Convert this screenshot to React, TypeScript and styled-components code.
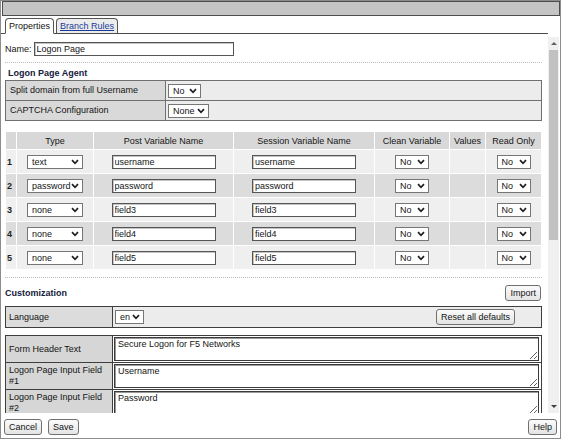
import React from "react";
import styled, { createGlobalStyle } from "styled-components";

const Global = createGlobalStyle`
  html, body { margin: 0; padding: 0; background: #fff; }
  body { font-family: "Liberation Sans", Arial, sans-serif; font-size: 9px; color: #141414; }
  * { box-sizing: border-box; }
`;

const FONT = `"Liberation Sans", Arial, sans-serif`;

const Window = styled.div`
  width: 561px;
  height: 439px;
  border: 1px solid #8c8c8c;
  display: flex;
  flex-direction: column;
  background: #fff;
  overflow: hidden;
`;

const TitleBar = styled.div`
  height: 15px;
  flex: none;
  margin: 0 0 0 1px;
  border: 1px solid #4d4d4d;
  background: #c4c4c4;
`;

const TabStrip = styled.div`
  flex: none;
  display: flex;
  align-items: flex-end;
  height: 17px;
  margin-top: 1px;
  padding-left: 4px;
  margin-right: 12px;
  border-bottom: 1px solid #4a4a4a;
`;

const Tab = styled.div<{ $active?: boolean }>`
  height: ${(p) => (p.$active ? 16 : 15)}px;
  padding: 0 3px;
  margin-right: 2px;
  margin-bottom: ${(p) => (p.$active ? "-1px" : "0")};
  border: 1px solid #555;
  border-bottom: ${(p) => (p.$active ? "1px solid #fff" : "none")};
  border-radius: 4px 4px 0 0;
  background: ${(p) => (p.$active ? "#fff" : "#ececec")};
  display: flex;
  align-items: center;
  color: ${(p) => (p.$active ? "#141414" : "#1a3a9a")};
  text-decoration: ${(p) => (p.$active ? "none" : "underline")};
`;

const Body = styled.div`
  flex: 1;
  display: flex;
  min-height: 0;
`;

const Content = styled.div`
  flex: 1;
  overflow: hidden;
  padding: 0 6px 0 4px;
  display: flex;
  flex-direction: column;
`;

const NameRow = styled.div`
  margin-top: 7px;
  height: 15px;
  display: flex;
  align-items: center;
  gap: 2px;
  flex: none;
`;

const Separator = styled.div<{ $mt: number }>`
  flex: none;
  margin-top: ${(p) => p.$mt}px;
  border-top: 1px dotted #bdbdbd;
`;

const SectionTitle = styled.div`
  flex: none;
  font-weight: bold;
  color: #14203a;
  height: 12px;
  line-height: 12px;
  padding-left: 3px;
  margin-top: 4px;
`;

const AgentTable = styled.table`
  flex: none;
  margin-top: 1px;
  width: 100%;
  border-collapse: collapse;
  td {
    border: 1px solid #707070;
    height: 20px;
    padding: 0 0 0 4px;
    vertical-align: middle;
  }
`;

const LabelCell = styled.td<{ $bg?: string; $w?: number }>`
  background: ${(p) => p.$bg || "#d9d9d9"};
  ${(p) => (p.$w ? `width: ${p.$w}px;` : "")}
  line-height: 11px;
`;

const ValueCell = styled.td<{ $bg?: string }>`
  background: ${(p) => p.$bg || "#ececec"};
  && { padding-left: 2px; }
`;

const GridTable = styled.table`
  flex: none;
  margin-top: 10px;
  width: 537px;
  border-collapse: separate;
  border-spacing: 1px;
  table-layout: fixed;
  th {
    background: #d8d8d8;
    font-weight: normal;
    height: 17px;
    padding: 0;
    text-align: center;
  }
  td {
    height: 23px;
    padding: 0;
    text-align: center;
    vertical-align: middle;
  }
`;

const GridRow = styled.tr<{ $even: boolean }>`
  td { background: ${(p) => (p.$even ? "#dcdcdc" : "#efefef")}; }
`;

const IndexCell = styled.td`
  && { text-align: left; padding-left: 1px; font-weight: bold; color: #222; }
`;

const CustomHeader = styled.div`
  flex: none;
  margin-top: 6px;
  height: 17px;
  display: flex;
  align-items: center;
  justify-content: space-between;
  padding-right: 1px;
  font-weight: bold;
  color: #14203a;
`;

const LangTable = styled.table`
  flex: none;
  margin-top: 5px;
  width: 100%;
  border-collapse: collapse;
  td {
    border: 1px solid #3e3e3e;
    height: 21px;
    padding: 0 0 0 3px;
    vertical-align: middle;
  }
`;

const LangValue = styled.div`
  display: flex;
  align-items: center;
  justify-content: space-between;
  padding-right: 26px;
`;

const FormTable = styled.table`
  flex: none;
  margin-top: 7px;
  width: 100%;
  border-collapse: collapse;
  td {
    border: 1px solid #3e3e3e;
    height: 27px;
    padding: 0 0 0 3px;
    vertical-align: middle;
  }
`;

const FormValue = styled.td`
  background: #fff;
  && { padding: 1px 2px 1px 1px; }
`;

const TextArea = styled.textarea`
  display: block;
  width: 100%;
  height: 24px;
  border: 1px solid #3a3a3a;
  box-shadow: inset 1px 1px 0 #9a9a9a;
  font: 9px ${FONT};
  color: #141414;
  padding: 1px 3px;
  margin: 0;
  outline: none;
`;

const TextInput = styled.input<{ $w: number }>`
  width: ${(p) => p.$w}px;
  height: 14px;
  border: 1px solid #555;
  box-shadow: inset 1px 1px 0 #c4c4c4;
  padding: 0 2px;
  font: 9px ${FONT};
  color: #141414;
  background: #fff;
  outline: none;
  vertical-align: middle;
`;

const SelectBox = styled.span<{ $w: number }>`
  display: inline-flex;
  align-items: center;
  justify-content: space-between;
  width: ${(p) => p.$w}px;
  height: 14px;
  border: 1px solid #767676;
  background: #fff;
  padding: 0 3px 0 4px;
  vertical-align: middle;
  color: #141414;
  font-weight: normal;
  text-align: left;
  line-height: 12px;
`;

const Button = styled.button`
  height: 16px;
  padding: 0 4px;
  border: 1px solid #707070;
  border-radius: 3px;
  background: linear-gradient(#fbfbfb, #e4e4e4);
  font: 9px ${FONT};
  line-height: 14px;
  color: #141414;
  display: inline-flex;
  align-items: center;
`;

const Scrollbar = styled.div`
  flex: none;
  width: 11px;
  margin: 3px 1px 0 0;
  background: #f0f0f0;
  display: flex;
  flex-direction: column;
  align-items: center;
`;

const ArrowBox = styled.div`
  height: 12px;
  width: 100%;
  display: flex;
  align-items: center;
  justify-content: center;
`;

const Thumb = styled.div`
  margin-top: 1px;
  width: 9px;
  height: 190px;
  background: #c1c1c1;
`;

const Spacer = styled.div`
  flex: 1;
`;

const Footer = styled.div`
  flex: none;
  height: 25px;
  display: flex;
  align-items: center;
  gap: 6px;
  padding: 2px 3px 0 3px;
`;

const HelpWrap = styled.div`
  margin-left: auto;
  display: flex;
`;

const Chevron = () => (
  <svg width="8" height="6" viewBox="0 0 8 6">
    <path d="M1 1.2 L4 4.3 L7 1.2" fill="none" stroke="#1e1e1e" strokeWidth="1.7" />
  </svg>
);

const Dropdown = ({ value, w }: { value: string; w: number }) => (
  <SelectBox $w={w}>
    <span>{value}</span>
    <Chevron />
  </SelectBox>
);

const rows = [
  { type: "text", name: "username" },
  { type: "password", name: "password" },
  { type: "none", name: "field3" },
  { type: "none", name: "field4" },
  { type: "none", name: "field5" },
];

const formRows = [
  { label: "Form Header Text", value: "Secure Logon for F5 Networks" },
  { label: "Logon Page Input Field #1", value: "Username" },
  { label: "Logon Page Input Field #2", value: "Password" },
];

export default function App() {
  return (
    <>
      <Global />
      <Window>
        <TitleBar />
        <TabStrip>
          <Tab $active>Properties</Tab>
          <Tab>Branch Rules</Tab>
        </TabStrip>
        <Body>
          <Content>
            <NameRow>
              <span>Name:</span>
              <TextInput $w={200} defaultValue="Logon Page" />
            </NameRow>
            <Separator $mt={6} />
            <SectionTitle>Logon Page Agent</SectionTitle>
            <AgentTable>
              <tbody>
                <tr>
                  <LabelCell $w={160}>Split domain from full Username</LabelCell>
                  <ValueCell>
                    <Dropdown value="No" w={33} />
                  </ValueCell>
                </tr>
                <tr>
                  <LabelCell $w={160}>CAPTCHA Configuration</LabelCell>
                  <ValueCell>
                    <Dropdown value="None" w={41} />
                  </ValueCell>
                </tr>
              </tbody>
            </AgentTable>
            <GridTable>
              <colgroup>
                <col style={{ width: 10 }} />
                <col style={{ width: 76 }} />
                <col style={{ width: 139 }} />
                <col style={{ width: 140 }} />
                <col style={{ width: 74 }} />
                <col style={{ width: 35 }} />
                <col style={{ width: 55 }} />
              </colgroup>
              <thead>
                <tr>
                  <th />
                  <th>Type</th>
                  <th>Post Variable Name</th>
                  <th>Session Variable Name</th>
                  <th>Clean Variable</th>
                  <th>Values</th>
                  <th>Read Only</th>
                </tr>
              </thead>
              <tbody>
                {rows.map((r, i) => (
                  <GridRow key={i} $even={i % 2 === 1}>
                    <IndexCell>{i + 1}</IndexCell>
                    <td>
                      <Dropdown value={r.type} w={56} />
                    </td>
                    <td>
                      <TextInput $w={104} defaultValue={r.name} />
                    </td>
                    <td>
                      <TextInput $w={104} defaultValue={r.name} />
                    </td>
                    <td>
                      <Dropdown value="No" w={34} />
                    </td>
                    <td />
                    <td>
                      <Dropdown value="No" w={34} />
                    </td>
                  </GridRow>
                ))}
              </tbody>
            </GridTable>
            <Separator $mt={7} />
            <CustomHeader>
              <span>Customization</span>
              <Button>Import</Button>
            </CustomHeader>
            <LangTable>
              <tbody>
                <tr>
                  <LabelCell $bg="#dcdcdc" $w={107}>Language</LabelCell>
                  <ValueCell $bg="#ececec">
                    <LangValue>
                      <Dropdown value="en" w={29} />
                      <Button>Reset all defaults</Button>
                    </LangValue>
                  </ValueCell>
                </tr>
              </tbody>
            </LangTable>
            <FormTable>
              <tbody>
                {formRows.map((f) => (
                  <tr key={f.label}>
                    <LabelCell $bg="#d6d6d6" $w={107}>{f.label}</LabelCell>
                    <FormValue>
                      <TextArea defaultValue={f.value} />
                    </FormValue>
                  </tr>
                ))}
              </tbody>
            </FormTable>
          </Content>
          <Scrollbar>
            <ArrowBox>
              <svg width="6" height="4" viewBox="0 0 6 4">
                <path d="M0 4 L3 1 L6 4 Z" fill="#606060" />
              </svg>
            </ArrowBox>
            <Thumb />
            <Spacer />
            <ArrowBox>
              <svg width="6" height="4" viewBox="0 0 6 4">
                <path d="M0 0 L3 3 L6 0 Z" fill="#404040" />
              </svg>
            </ArrowBox>
          </Scrollbar>
        </Body>
        <Footer>
          <Button>Cancel</Button>
          <Button>Save</Button>
          <HelpWrap>
            <Button>Help</Button>
          </HelpWrap>
        </Footer>
      </Window>
    </>
  );
}
